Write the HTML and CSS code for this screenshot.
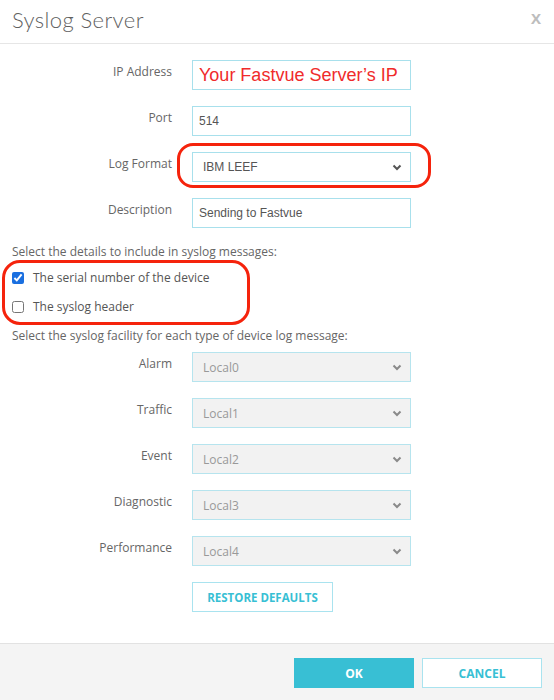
FILE: index.html
```html
<!DOCTYPE html>
<html lang="en">
<head>
    <meta charset="UTF-8">
    <meta name="viewport" content="width=device-width, initial-scale=1.0">
    <title>Syslog Server</title>
    <link rel="stylesheet" href="styles.css">
</head>
<body>
    <div class="modal">
        <div class="modal-header">
            <h1>Syslog Server</h1>
            <span class="close">X</span>
        </div>

        <div class="modal-body">
            <div class="form-row">
                <label>IP Address</label>
                <div class="field field-note">Your Fastvue Server’s IP</div>
            </div>
            <div class="form-row">
                <label>Port</label>
                <div class="field">514</div>
            </div>
            <div class="form-row">
                <label>Log Format</label>
                <div class="select select-format marked">
                    <span>IBM LEEF</span>
                    <svg width="10" height="7" viewBox="0 0 10 7"><path d="M1.5 1.5 L5 5 L8.5 1.5" fill="none" stroke="#555" stroke-width="2"/></svg>
                </div>
            </div>
            <div class="form-row">
                <label>Description</label>
                <div class="field">Sending to Fastvue</div>
            </div>

            <p class="section-note">Select the details to include in syslog messages:</p>
            <div class="check-group marked">
                <label class="check"><input type="checkbox" checked> The serial number of the device</label>
                <label class="check"><input type="checkbox"> The syslog header</label>
            </div>

            <p class="section-note note-facility">Select the syslog facility for each type of device log message:</p>
            <div class="form-row">
                <label>Alarm</label>
                <div class="select disabled"><span>Local0</span><svg width="10" height="7" viewBox="0 0 10 7"><path d="M1.5 1.5 L5 5 L8.5 1.5" fill="none" stroke="#8a8a8a" stroke-width="2"/></svg></div>
            </div>
            <div class="form-row">
                <label>Traffic</label>
                <div class="select disabled"><span>Local1</span><svg width="10" height="7" viewBox="0 0 10 7"><path d="M1.5 1.5 L5 5 L8.5 1.5" fill="none" stroke="#8a8a8a" stroke-width="2"/></svg></div>
            </div>
            <div class="form-row">
                <label>Event</label>
                <div class="select disabled"><span>Local2</span><svg width="10" height="7" viewBox="0 0 10 7"><path d="M1.5 1.5 L5 5 L8.5 1.5" fill="none" stroke="#8a8a8a" stroke-width="2"/></svg></div>
            </div>
            <div class="form-row">
                <label>Diagnostic</label>
                <div class="select disabled"><span>Local3</span><svg width="10" height="7" viewBox="0 0 10 7"><path d="M1.5 1.5 L5 5 L8.5 1.5" fill="none" stroke="#8a8a8a" stroke-width="2"/></svg></div>
            </div>
            <div class="form-row">
                <label>Performance</label>
                <div class="select disabled"><span>Local4</span><svg width="10" height="7" viewBox="0 0 10 7"><path d="M1.5 1.5 L5 5 L8.5 1.5" fill="none" stroke="#8a8a8a" stroke-width="2"/></svg></div>
            </div>
            <div class="form-row">
                <span></span>
                <div><button class="btn btn-outline btn-restore">RESTORE DEFAULTS</button></div>
            </div>
        </div>

        <div class="modal-footer">
            <button class="btn btn-primary">OK</button>
            <button class="btn btn-outline">CANCEL</button>
        </div>
    </div>
</body>
</html>
```

FILE: styles.css
```css
* {
    margin: 0;
    padding: 0;
    box-sizing: border-box;
}

body {
    font-family: 'Open Sans', 'Liberation Sans', sans-serif;
    font-size: 12px;
    color: #666;
    background-color: #fff;
}

.modal {
    height: 100vh;
    display: flex;
    flex-direction: column;
}

.modal-header {
    height: 44px;
    border-bottom: 1px solid #e6e6e6;
    display: flex;
    justify-content: space-between;
    align-items: flex-start;
    padding: 6px 12px 0 12px;
}

.modal-header h1 {
    font-family: 'Lato', 'Open Sans', sans-serif;
    font-size: 22px;
    font-weight: 300;
    letter-spacing: 0.4px;
    color: #5f5f5f;
    line-height: 28px;
}

.close {
    font-size: 15px;
    font-weight: 700;
    color: #bdbdbd;
    line-height: 20px;
    padding-top: 2px;
    margin-right: 1px;
}

.modal-body {
    flex: 1;
    padding: 16px 12px 0 12px;
}

.form-row {
    display: grid;
    grid-template-columns: 160px 219px;
    column-gap: 20px;
    margin-bottom: 16px;
}

.form-row label {
    text-align: right;
    line-height: 16px;
    padding-top: 4px;
}

.field,
.select {
    height: 30px;
    border: 1px solid #a8e0ec;
    font-family: 'Liberation Sans', Arial, sans-serif;
    font-size: 12px;
    color: #555;
    display: flex;
    align-items: center;
    padding: 0 6px;
}

.field-note {
    font-size: 18px;
    color: #f02b2b;
}

.select {
    justify-content: space-between;
    padding: 0 8px 0 10px;
}

.select.disabled {
    background: #f2f2f2;
    border-color: #b6e4ee;
    font-family: 'Open Sans', sans-serif;
    color: #999;
}

.marked {
    position: relative;
}

/* red hand-drawn style highlight */
.marked::after {
    content: "";
    position: absolute;
    border: 3px solid #f5230c;
    border-radius: 16px;
    pointer-events: none;
}

.select-format::after {
    top: -10px;
    bottom: -7px;
    left: -16px;
    right: -21px;
}

.check-group {
    width: 248px;
    margin-left: -10px;
    padding-left: 10px;
    display: flex;
    flex-direction: column;
    gap: 13px;
}

.check-group::after {
    top: -10px;
    bottom: -10px;
    left: 0;
    right: 0;
    border-radius: 18px;
}

.section-note {
    line-height: 16px;
    margin-bottom: 10px;
}

.note-facility {
    margin-top: 13px;
    margin-bottom: 8px;
}

.check {
    display: flex;
    align-items: center;
    gap: 9px;
    line-height: 16px;
    color: #555;
}

.check input {
    width: 12px;
    height: 12px;
    margin: 0;
    accent-color: #1a6fe0;
}

.btn {
    height: 30px;
    font-family: 'Open Sans', sans-serif;
    font-size: 12px;
    font-weight: bold;
    cursor: pointer;
    background: #fff;
}

.btn-outline {
    border: 1px solid #a9e3ef;
    color: #38bfd4;
}

.btn-restore {
    width: 141px;
    font-size: 11.5px;
}

.btn-primary {
    background: #38bfd4;
    border: 1px solid #38bfd4;
    color: #fff;
}

.modal-footer {
    height: 57px;
    border-top: 1px solid #e2e2e2;
    background: #f4f4f4;
    display: flex;
    justify-content: flex-end;
    gap: 8px;
    padding: 14px 12px 0 0;
}

.modal-footer .btn {
    width: 120px;
}
```
